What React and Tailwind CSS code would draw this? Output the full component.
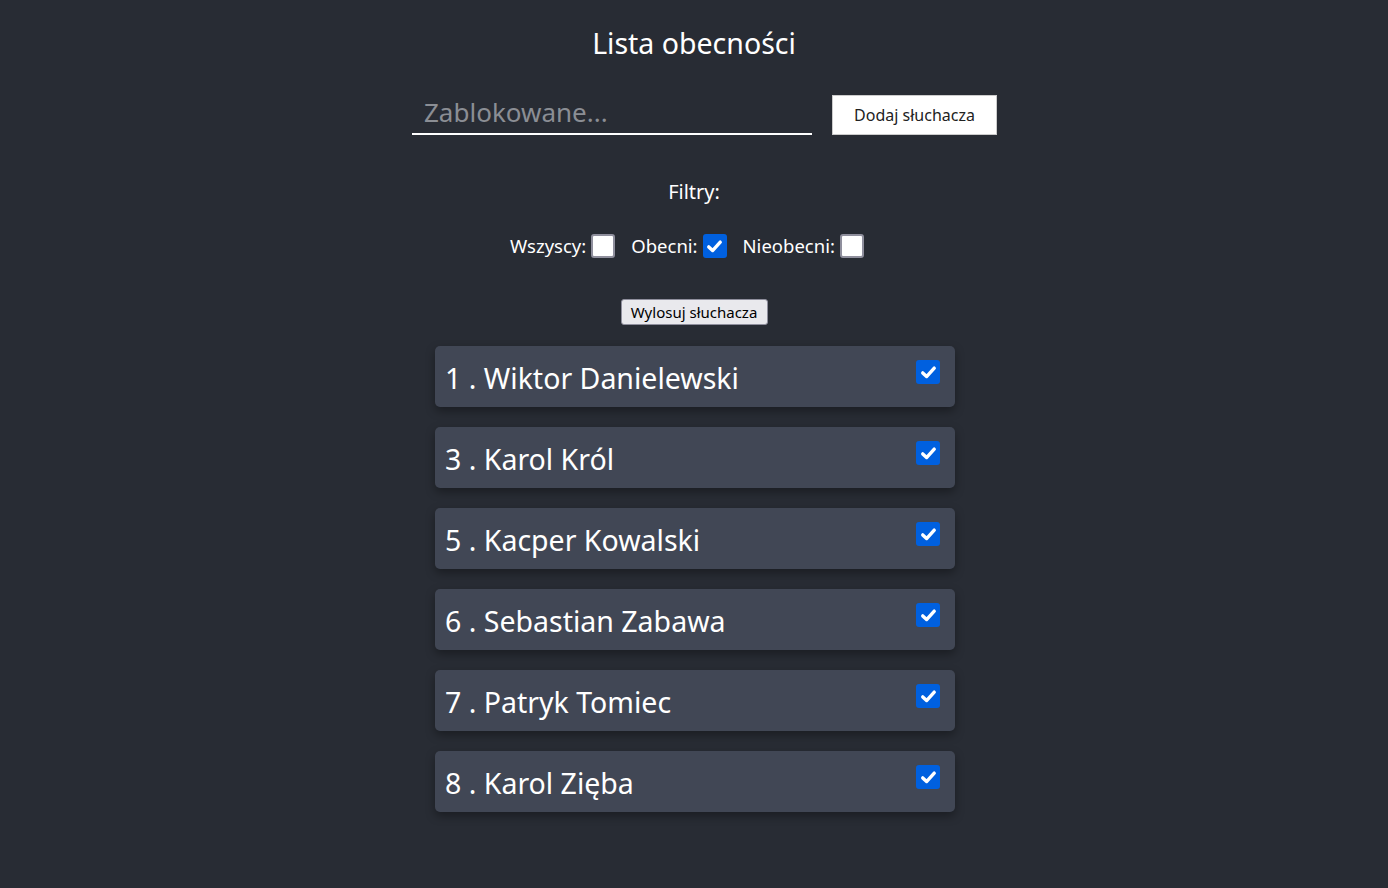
import React, { useState } from "react";

const students = [
    { id: 1, name: "Wiktor Danielewski" },
    { id: 3, name: "Karol Król" },
    { id: 5, name: "Kacper Kowalski" },
    { id: 6, name: "Sebastian Zabawa" },
    { id: 7, name: "Patryk Tomiec" },
    { id: 8, name: "Karol Zięba" },
];

// Checkbox drawn by hand so the size and the blue match the screenshot
const Box = ({ checked, onClick }) => (
    <button
        type="button"
        onClick={onClick}
        className={
            checked
                ? "w-6 h-6 rounded-[3px] bg-[#0060df] flex items-center justify-center shrink-0"
                : "w-6 h-6 rounded-[3px] bg-white border-2 border-[#8f8f9d] shrink-0"
        }
    >
        {checked && (
            <svg width="17" height="17" viewBox="0 0 16 16">
                <path d="M2.6 8.4 L6.2 11.8 L13.4 3.9" fill="none" stroke="white" strokeWidth="3.2" strokeLinecap="round" strokeLinejoin="round" />
            </svg>
        )}
    </button>
);

const App = () => {
    const [filter, setFilter] = useState("present");
    const [present, setPresent] = useState(students.map(() => true));

    const toggle = (i) => {
        const next = [...present];
        next[i] = !next[i];
        setPresent(next);
    };

    return (
        <div className="min-h-screen bg-[#282c34] flex flex-col items-center text-white font-['Noto_Sans',sans-serif]">
            <h1 className="pt-[23px] h-[63px] text-[28.5px] leading-10 font-normal">Lista obecności</h1>

            {/* Input + add button */}
            <div className="mt-[32px] ml-[21px] flex items-start gap-5 h-10">
                <input
                    type="text"
                    placeholder="Zablokowane..."
                    disabled
                    className="w-[400px] h-10 bg-transparent border-b-2 border-white text-[26px] px-3 pb-1 placeholder:text-[#8b8e94] outline-none"
                />
                <button type="button" className="w-[165px] h-10 bg-white text-[#222] text-[16px] border border-[#ccc]">
                    Dodaj słuchacza
                </button>
            </div>

            <div className="mt-[43px] text-[20px] leading-7">Filtry:</div>

            {/* Filters */}
            <div className="mt-[28px] mr-[14px] flex items-center gap-4 text-[18.5px] h-6">
                <label className="flex items-center gap-[5px]">
                    Wszyscy:
                    <Box checked={filter === "all"} onClick={() => setFilter("all")} />
                </label>
                <label className="flex items-center gap-[5px]">
                    Obecni:
                    <Box checked={filter === "present"} onClick={() => setFilter("present")} />
                </label>
                <label className="flex items-center gap-[5px]">
                    Nieobecni:
                    <Box checked={filter === "absent"} onClick={() => setFilter("absent")} />
                </label>
            </div>

            <button
                type="button"
                className="mt-[41px] w-[147px] h-[26px] bg-[#e9e9ed] text-black text-[15px] leading-none border border-[#8f8f9d] rounded-[3px]"
            >
                Wylosuj słuchacza
            </button>

            {/* Student list */}
            <div className="mt-[21px] ml-[2px] flex flex-col gap-5 pb-16">
                {students.map((s, i) => (
                    <div
                        key={s.id}
                        className="w-[520px] h-[61px] bg-[#414755] rounded-[5px] shadow-[0_4px_10px_rgba(0,0,0,0.35)] flex items-start justify-between pl-[10px] pr-[15px]"
                    >
                        <span className="text-[28.5px] leading-[61px] pt-[2px]">
                            {s.id} . {s.name}
                        </span>
                        <div className="mt-[14px]">
                            <Box checked={present[i]} onClick={() => toggle(i)} />
                        </div>
                    </div>
                ))}
            </div>
        </div>
    );
};

export default App;
